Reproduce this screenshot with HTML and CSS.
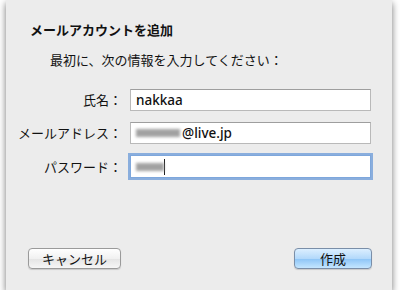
FILE: index.html
```html
<!DOCTYPE html>
<html lang="ja">

<head>
    <meta charset="UTF-8">
    <meta name="viewport" content="width=device-width, initial-scale=1.0">
    <title>メールアカウントを追加</title>
    <link rel="stylesheet" href="styles.css">
</head>

<body>
    <div class="sheet">
        <h1 class="sheet-title">メールアカウントを追加</h1>
        <p class="sheet-lead">最初に、次の情報を入力してください：</p>

        <!-- Account form -->
        <div class="account-form">
            <label class="field-label">氏名：</label>
            <div class="field-input">nakkaa</div>

            <label class="field-label">メールアドレス：</label>
            <div class="field-input"><span class="masked masked-mail"></span>@live.jp</div>

            <label class="field-label">パスワード：</label>
            <div class="field-input is-focused"><span class="masked masked-pass"></span><span class="caret"></span></div>
        </div>

        <div class="sheet-footer">
            <button class="push-button">キャンセル</button>
            <button class="push-button is-default">作成</button>
        </div>
    </div>
</body>

</html>
```

FILE: styles.css
```css
:root {
    --sheet-bg: #ececec;
    --text-primary: #111;
    --field-border: #b9b9b9;
    --focus-color: #6a9ad8;
}

* {
    box-sizing: border-box;
}

body {
    margin: 0;
    background: #fff;
    font-family: "Noto Sans CJK JP", "Liberation Sans", sans-serif;
    font-size: 13px;
    color: var(--text-primary);
}

.sheet {
    display: flex;
    flex-direction: column;
    width: 386px;
    height: 290px;
    margin-left: 6px;
    padding: 21px 0 21px 0;
    background: var(--sheet-bg);
    box-shadow: 0 3px 7px rgba(0, 0, 0, 0.55);
}

.sheet-title {
    margin: 0 0 0 24px;
    font-size: 13px;
    line-height: 18px;
    font-weight: bold;
}

.sheet-lead {
    margin: 12px 0 0 44px;
    line-height: 18px;
}

.account-form {
    display: grid;
    grid-template-columns: 116px 241px;
    column-gap: 8px;
    row-gap: 11px;
    align-items: center;
    margin-top: 20px;
}

.field-label {
    text-align: right;
    line-height: 18px;
    white-space: nowrap;
    font-size: 13px;
}

.field-input {
    display: flex;
    align-items: center;
    height: 22px;
    padding: 0 5px;
    background: #fff;
    border: 1px solid var(--field-border);
    border-top-color: #9e9e9e;
    font-family: "Lucida Grande", "Noto Sans", sans-serif;
    font-size: 13.5px;
    font-weight: 500;
}

.field-input.is-focused {
    height: 23px;
    border: 1px solid #7ea7dc;
    box-shadow: 0 0 0 2px rgba(106, 154, 216, 0.75);
}

.masked {
    display: inline-block;
    height: 8px;
    background: #8a8a8a;
    filter: blur(1.6px);
    opacity: 0.8;
}

.masked-mail {
    width: 44px;
    margin-right: 2px;
}

.masked-pass {
    width: 28px;
}

.caret {
    display: inline-block;
    width: 1px;
    height: 16px;
    background: #222;
}

.sheet-footer {
    display: flex;
    justify-content: space-between;
    margin-top: auto;
    padding: 0 20px 0 22px;
}

.push-button {
    height: 21px;
    padding: 0;
    border: 1px solid #9a9a9a;
    border-radius: 4px;
    background: linear-gradient(#ffffff, #f1f1f1 50%, #e4e4e4 51%, #f6f6f6);
    box-shadow: 0 1px 1px rgba(0, 0, 0, 0.15);
    font-family: "Noto Sans CJK JP", sans-serif;
    font-size: 13px;
    line-height: 18px;
    color: var(--text-primary);
    width: 93px;
}

.push-button.is-default {
    width: 78px;
    border-color: #7a8ea8;
    background: linear-gradient(#dcefff, #b3d9fb 50%, #8cc4f6 51%, #c4e6ff);
}
```
